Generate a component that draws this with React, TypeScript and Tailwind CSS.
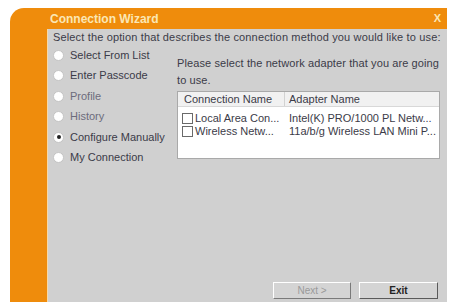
import { useState } from "react";

const options = [
  { label: "Select From List", dim: false },
  { label: "Enter Passcode", dim: false },
  { label: "Profile", dim: true },
  { label: "History", dim: true },
  { label: "Configure Manually", dim: false },
  { label: "My Connection", dim: false },
];

const adapters = [
  { conn: "Local Area Con...", adapter: "Intel(K) PRO/1000 PL Netw..." },
  { conn: "Wireless Netw...", adapter: "11a/b/g Wireless LAN Mini P..." },
];

const App = () => {
  const [selected, setSelected] = useState(4);

  return (
    <div
      className="w-[454px] h-[306px] bg-white pl-[10px] pt-[8px]"
      style={{ fontFamily: '"Liberation Sans", Arial, sans-serif' }}
    >
      <div className="w-[437px] h-[294px] bg-[#ef8c0c] rounded-tl-[14px] flex flex-col overflow-hidden">
        {/* Title bar */}
        <div className="h-[21px] flex items-center justify-between pl-[40px] pr-[6px]">
          <span className="text-[12px] font-bold text-[#fbe7b4] leading-none">Connection Wizard</span>
          <span className="text-[11px] font-bold text-[#fbe7b4] leading-none">X</span>
        </div>

        <div className="flex flex-1">
          <div className="w-[38px] border-r border-[#f6d9a8]" />

          {/* Content */}
          <div className="flex-1 bg-[#d0d0d0] flex flex-col px-[5px] pt-[1px] pb-[3px] text-[#3b3b48]">
            <p className="text-[11px] leading-[14px] tracking-[0.15px]">
              Select the option that describes the connection method you would like to use:
            </p>

            <div className="flex mt-[1px]">
              {/* Options */}
              <div className="w-[124px] flex flex-col">
                {options.map((o, i) => (
                  <label
                    key={o.label}
                    onClick={() => setSelected(i)}
                    className="h-[20.5px] flex items-center gap-[6px] cursor-pointer"
                  >
                    <span className="w-[11px] h-[11px] rounded-full bg-white border border-[#c4c4c4] flex items-center justify-center">
                      {selected === i && <span className="w-[4px] h-[4px] rounded-full bg-[#222]" />}
                    </span>
                    <span className={`text-[11px] leading-none ${o.dim ? "text-[#6c6c7c]" : "text-[#3b3b48]"}`}>
                      {o.label}
                    </span>
                  </label>
                ))}
              </div>

              {/* Adapter selection */}
              <div className="flex-1 pt-[10px] pr-[2px]">
                <p className="text-[11px] leading-[17px] tracking-[0.1px]">
                  Please select the network adapter that you are going to use.
                </p>
                <div className="mt-[2px] h-[68px] bg-white border border-[#a9a9a9]">
                  <div className="flex h-[15px] bg-[#f1f1f1] border-b border-[#d8d8d8] text-[11px] leading-[15px]">
                    <div className="w-[107px] pl-[6px] border-r border-[#d2d2d2]">Connection Name</div>
                    <div className="pl-[4px]">Adapter Name</div>
                  </div>
                  <div className="pt-[5px]">
                    {adapters.map((a) => (
                      <div key={a.conn} className="flex h-[13px] items-center text-[11px] leading-none">
                        <div className="w-[107px] pl-[4px] flex items-center gap-[2px]">
                          <span className="w-[11px] h-[11px] border border-[#6a6a6a] bg-white" />
                          <span>{a.conn}</span>
                        </div>
                        <div className="pl-[4px]">{a.adapter}</div>
                      </div>
                    ))}
                  </div>
                </div>
              </div>
            </div>

            {/* Buttons */}
            <div className="mt-auto flex justify-end gap-[8px] pr-[4px]">
              <button className="w-[78px] h-[17px] bg-[#d4d4d4] border border-t-white border-l-white border-b-[#7a7a7a] border-r-[#7a7a7a] text-[10px] text-[#9a9a9a] leading-none">
                Next &gt;
              </button>
              <button className="w-[79px] h-[17px] bg-[#d4d4d4] border border-t-white border-l-white border-b-[#5a5a5a] border-r-[#5a5a5a] text-[10px] font-bold text-[#222] leading-none">
                Exit
              </button>
            </div>
          </div>
        </div>
      </div>
    </div>
  );
};

export default App;
